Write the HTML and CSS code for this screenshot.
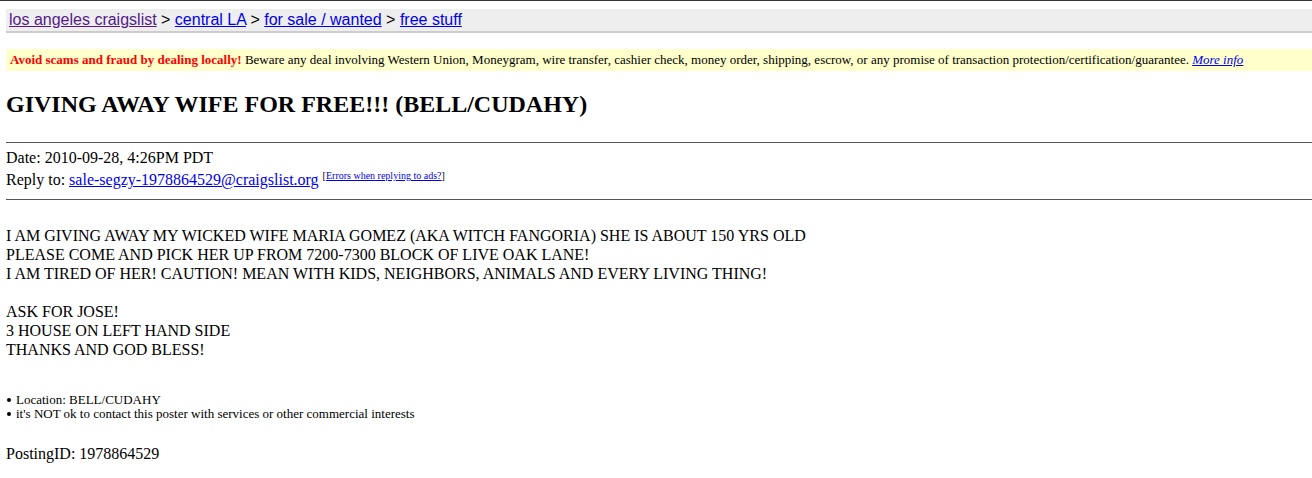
FILE: index.html
```html
<!DOCTYPE html>
<html lang="en">
<head>
  <meta charset="UTF-8" />
  <title>GIVING AWAY WIFE FOR FREE!!! (BELL/CUDAHY)</title>
  <link rel="stylesheet" href="styles.css">
</head>
<body>

  <div class="bchead">
    <a href="#" class="visited">los angeles craigslist</a> &gt;
    <a href="#">central LA</a> &gt;
    <a href="#">for sale / wanted</a> &gt;
    <a href="#">free stuff</a>
  </div>

  <div class="warning">
    <b>Avoid scams and fraud by dealing locally!</b> Beware any deal involving Western Union, Moneygram, wire transfer, cashier check, money order, shipping, escrow, or any promise of transaction protection/certification/guarantee. <a href="#"><i>More info</i></a>
  </div>

  <h2>GIVING AWAY WIFE FOR FREE!!! (BELL/CUDAHY)</h2>
  <hr>

  <div class="postinginfo">
    Date: 2010-09-28,&nbsp;4:26PM PDT<br>
    Reply to: <a href="#">sale-segzy-1978864529@craigslist.org</a> <sup>[<a href="#">Errors when replying to ads?</a>]</sup>
  </div>
  <hr>

  <div id="userbody">
    I AM GIVING AWAY MY WICKED WIFE MARIA GOMEZ (AKA WITCH FANGORIA) SHE IS ABOUT 150 YRS OLD<br>
    PLEASE COME AND PICK HER UP FROM 7200-7300 BLOCK OF LIVE OAK LANE!<br>
    I AM TIRED OF HER! CAUTION! MEAN WITH KIDS, NEIGHBORS, ANIMALS AND EVERY LIVING THING!<br>
    <br>
    ASK FOR JOSE!<br>
    3 HOUSE ON LEFT HAND SIDE<br>
    THANKS AND GOD BLESS!
  </div>

  <ul class="blurbs">
    <li>Location: BELL/CUDAHY</li>
    <li>it's NOT ok to contact this poster with services or other commercial interests</li>
  </ul>

  <div class="postingid">PostingID: 1978864529</div>

</body>
</html>
```

FILE: styles.css
```css
html {
  border-top: 1px solid #333;
}

body {
  margin: 8px 0 0 6px;
  font-family: "Liberation Serif", "Times New Roman", serif;
  font-size: 16px;
  line-height: 19px;
  color: #000;
  background: #fff;
}

a {
  color: #0000ee;
}

a.visited {
  color: #551a8b;
}

.bchead {
  background-color: #eee;
  border-bottom: 2px solid #ccc;
  padding: 2px 3px;
  height: 18px;
  line-height: 18px;
  font-family: "Liberation Sans", Arial, sans-serif;
  font-size: 16px;
}

.warning {
  margin-top: 16px;
  background-color: #ffc;
  padding: 0 4px;
  height: 22px;
  line-height: 22px;
  font-size: 13px;
}

.warning b {
  color: red;
}

h2 {
  font-size: 24px;
  line-height: 28px;
  margin: 19px 0 24px;
}

hr {
  border: 0;
  border-top: 1px solid #555;
  height: 0;
  margin: 0;
}

.postinginfo {
  line-height: 22px;
  margin: 4px 0 8px;
}

.postinginfo sup {
  font-size: 10px;
  line-height: 0;
}

#userbody {
  margin-top: 26px;
}

.blurbs {
  margin: 34px 0 23px;
  padding-left: 0;
  list-style: none;
  font-size: 13px;
  line-height: 14px;
}

.blurbs li::before {
  content: "";
  display: inline-block;
  width: 4px;
  height: 4px;
  margin: 0 5px 0 1px;
  border-radius: 50%;
  background: #000;
  vertical-align: 2px;
}

.postingid {
  margin: 0;
}
```
